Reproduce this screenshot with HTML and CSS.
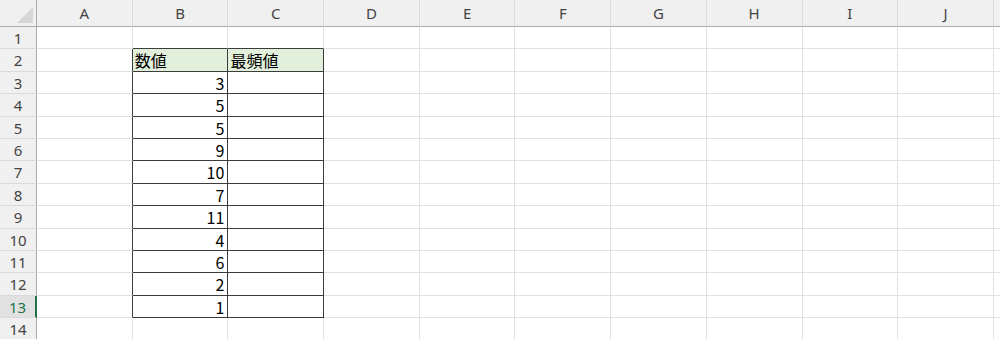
FILE: index.html
```html
<!DOCTYPE html>
<html lang="ja">
<head>
    <meta charset="UTF-8">
    <title>最頻値</title>
    <link rel="stylesheet" href="styles.css">
</head>
<body>
    <div class="sheet">
        <!-- column headers -->
        <div class="corner"><span class="tri"></span></div>
        <div class="ch">A</div><div class="ch">B</div><div class="ch">C</div><div class="ch">D</div><div class="ch">E</div>
        <div class="ch">F</div><div class="ch">G</div><div class="ch">H</div><div class="ch">I</div><div class="ch">J</div><div class="ch"></div>

        <!-- row 1 -->
        <div class="rh">1</div>
        <div class="c"></div><div class="c above"></div><div class="c above"></div><div class="c"></div><div class="c"></div>
        <div class="c"></div><div class="c"></div><div class="c"></div><div class="c"></div><div class="c"></div><div class="c"></div>

        <!-- row 2 -->
        <div class="rh">2</div>
        <div class="c left-of"></div><div class="c t head">数値</div><div class="c t head">最頻値</div><div class="c"></div><div class="c"></div>
        <div class="c"></div><div class="c"></div><div class="c"></div><div class="c"></div><div class="c"></div><div class="c"></div>

        <div class="rh">3</div>
        <div class="c left-of"></div><div class="c t num">3</div><div class="c t"></div><div class="c"></div><div class="c"></div>
        <div class="c"></div><div class="c"></div><div class="c"></div><div class="c"></div><div class="c"></div><div class="c"></div>

        <div class="rh">4</div>
        <div class="c left-of"></div><div class="c t num">5</div><div class="c t"></div><div class="c"></div><div class="c"></div>
        <div class="c"></div><div class="c"></div><div class="c"></div><div class="c"></div><div class="c"></div><div class="c"></div>

        <div class="rh">5</div>
        <div class="c left-of"></div><div class="c t num">5</div><div class="c t"></div><div class="c"></div><div class="c"></div>
        <div class="c"></div><div class="c"></div><div class="c"></div><div class="c"></div><div class="c"></div><div class="c"></div>

        <div class="rh">6</div>
        <div class="c left-of"></div><div class="c t num">9</div><div class="c t"></div><div class="c"></div><div class="c"></div>
        <div class="c"></div><div class="c"></div><div class="c"></div><div class="c"></div><div class="c"></div><div class="c"></div>

        <div class="rh">7</div>
        <div class="c left-of"></div><div class="c t num">10</div><div class="c t"></div><div class="c"></div><div class="c"></div>
        <div class="c"></div><div class="c"></div><div class="c"></div><div class="c"></div><div class="c"></div><div class="c"></div>

        <div class="rh">8</div>
        <div class="c left-of"></div><div class="c t num">7</div><div class="c t"></div><div class="c"></div><div class="c"></div>
        <div class="c"></div><div class="c"></div><div class="c"></div><div class="c"></div><div class="c"></div><div class="c"></div>

        <div class="rh">9</div>
        <div class="c left-of"></div><div class="c t num">11</div><div class="c t"></div><div class="c"></div><div class="c"></div>
        <div class="c"></div><div class="c"></div><div class="c"></div><div class="c"></div><div class="c"></div><div class="c"></div>

        <div class="rh">10</div>
        <div class="c left-of"></div><div class="c t num">4</div><div class="c t"></div><div class="c"></div><div class="c"></div>
        <div class="c"></div><div class="c"></div><div class="c"></div><div class="c"></div><div class="c"></div><div class="c"></div>

        <div class="rh">11</div>
        <div class="c left-of"></div><div class="c t num">6</div><div class="c t"></div><div class="c"></div><div class="c"></div>
        <div class="c"></div><div class="c"></div><div class="c"></div><div class="c"></div><div class="c"></div><div class="c"></div>

        <div class="rh">12</div>
        <div class="c left-of"></div><div class="c t num">2</div><div class="c t"></div><div class="c"></div><div class="c"></div>
        <div class="c"></div><div class="c"></div><div class="c"></div><div class="c"></div><div class="c"></div><div class="c"></div>

        <div class="rh active">13</div>
        <div class="c left-of"></div><div class="c t num">1</div><div class="c t"></div><div class="c"></div><div class="c"></div>
        <div class="c"></div><div class="c"></div><div class="c"></div><div class="c"></div><div class="c"></div><div class="c"></div>

        <div class="rh">14</div>
        <div class="c"></div><div class="c"></div><div class="c"></div><div class="c"></div><div class="c"></div>
        <div class="c"></div><div class="c"></div><div class="c"></div><div class="c"></div><div class="c"></div><div class="c"></div>
    </div>
</body>
</html>
```

FILE: styles.css
```css
html, body {
    margin: 0;
    padding: 0;
    background-color: #fff;
    overflow: hidden;
}

.sheet {
    display: grid;
    grid-template-columns: 37px repeat(10, 95.7px) 1fr;
    grid-template-rows: 27px;
    grid-auto-rows: 22.4px;
    width: 1000px;
    font-family: "Noto Sans CJK JP", sans-serif;
    font-size: 16px;
    color: #000;
}

.sheet > div {
    box-sizing: border-box;
    overflow: hidden;
    white-space: nowrap;
}

/* headers */
.corner {
    position: relative;
    background-color: #f0f0f0;
    border-right: 1px solid #ababab;
    border-bottom: 1px solid #ababab;
}

.tri {
    position: absolute;
    right: 3px;
    bottom: 3px;
    width: 0;
    height: 0;
    border-left: 16px solid transparent;
    border-bottom: 16px solid #d6d6d6;
}

.ch {
    background-color: #f0f0f0;
    border-right: 1px solid #dadada;
    border-bottom: 1px solid #ababab;
    color: #444;
    font-family: "Noto Sans", sans-serif;
    font-size: 15px;
    text-align: center;
    line-height: 27px;
}

.rh {
    background-color: #f0f0f0;
    border-right: 1px solid #ababab;
    border-bottom: 1px solid #dadada;
    color: #444;
    font-family: "Noto Sans", sans-serif;
    font-size: 15px;
    text-align: center;
    line-height: 22px;
}

.rh.active {
    background-color: #e1e1e1;
    color: #217346;
    border-right: 2px solid #217346;
}

/* cells */
.c {
    border-right: 1px solid #e1e1e1;
    border-bottom: 1px solid #e1e1e1;
    padding: 0 3px;
    line-height: 22px;
}

.c.above {
    border-bottom-color: #3c3c3c;
}

.c.left-of {
    border-right-color: #3c3c3c;
}

.c.t {
    border-right-color: #3c3c3c;
    border-bottom-color: #3c3c3c;
}

.head {
    background-color: #e2efda;
    padding-left: 2px;
}

.num {
    text-align: right;
}
```
